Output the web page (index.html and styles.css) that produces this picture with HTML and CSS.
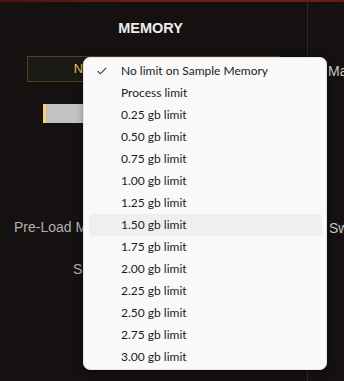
FILE: index.html
```html
<!DOCTYPE html>
<html>
<head>
<meta charset="utf-8">
<link rel="stylesheet" href="styles.css">
</head>
<body>
<div class="topline"></div>
<div class="main">
  <section class="left">
    <h1 class="title">MEMORY</h1>
    <div class="selectbox">No limit on Sample Memory</div>
    <div class="bar"><span class="bar-edge"></span></div>
    <div class="label preload">Pre-Load Memory</div>
    <div class="label small">Sample Memory</div>
  </section>
  <section class="right">
    <div class="label r1">Max</div>
    <div class="label r2">Sw</div>
  </section>
</div>
<div class="menu">
  <div class="item"><svg class="check" width="10" height="8" viewBox="0 0 10 8"><polyline points="0.8,4.2 3.4,6.8 9.2,0.8" fill="none" stroke="#333" stroke-width="1.1"/></svg>No limit on Sample Memory</div>
  <div class="item">Process limit</div>
  <div class="item">0.25 gb limit</div>
  <div class="item">0.50 gb limit</div>
  <div class="item">0.75 gb limit</div>
  <div class="item">1.00 gb limit</div>
  <div class="item">1.25 gb limit</div>
  <div class="item hover">1.50 gb limit</div>
  <div class="item">1.75 gb limit</div>
  <div class="item">2.00 gb limit</div>
  <div class="item">2.25 gb limit</div>
  <div class="item">2.50 gb limit</div>
  <div class="item">2.75 gb limit</div>
  <div class="item">3.00 gb limit</div>
</div>
</body>
</html>
```
FILE: styles.css
```css
html, body {
  margin: 0;
  padding: 0;
  background: #141110;
  width: 344px;
  height: 381px;
  overflow: hidden;
  font-family: "Liberation Sans", Arial, sans-serif;
}
.topline {
  height: 2px;
  background: linear-gradient(90deg, #4a1412, #6e1c1a 40%, #6a1a18);
}
.main {
  display: flex;
  height: 379px;
}
.left {
  flex: 0 0 308px;
  border-right: 1px solid #2a2625;
  box-sizing: border-box;
}
.title {
  margin: 18px 0 0 0;
  text-align: center;
  font-size: 14.5px;
  font-weight: bold;
  color: #ededed;
  padding-right: 6px;
  line-height: 16px;
}
.selectbox {
  margin: 20px 0 0 27px;
  width: 251px;
  height: 24px;
  border: 1px solid #4a4322;
  background: #1b1913;
  color: #e3c556;
  font-size: 13px;
  line-height: 24px;
  text-align: center;
  white-space: nowrap;
}
.bar {
  margin: 22px 0 0 43px;
  width: 222px;
  height: 19px;
  background: #c2c2c2;
  display: flex;
}
.bar-edge {
  width: 3px;
  background: #f2d36a;
}
.label {
  color: #b0b0b0;
  font-size: 14px;
  line-height: 16px;
  white-space: nowrap;
}
.preload {
  margin: 96px 0 0 14px;
}
.small {
  margin: 26px 0 0 73px;
}
.right {
  flex: 1 1 auto;
  min-width: 0;
  overflow: hidden;
}
.r1 {
  margin: 61px 0 0 20px;
  color: #c8c8c8;
}
.r2 {
  margin: 141px 0 0 21px;
  color: #c8c8c8;
}
.menu {
  position: absolute;
  left: 83px;
  top: 57px;
  width: 244px;
  height: 313px;
  box-sizing: border-box;
  background: #f9f9f9;
  border: 1px solid #e4e4e4;
  border-radius: 7px;
  box-shadow: 0 2px 6px rgba(0,0,0,0.35);
  padding: 2px 4px 0 5px;
  font-family: Lato, "Open Sans", sans-serif;
  font-size: 12px;
  color: #1b1b1b;
}
.item {
  position: relative;
  height: 22px;
  line-height: 22px;
  padding-left: 32px;
  border-radius: 4px;
}
.item.hover {
  background: #efefef;
}
.check {
  position: absolute;
  left: 8px;
  top: 7px;
}
```
